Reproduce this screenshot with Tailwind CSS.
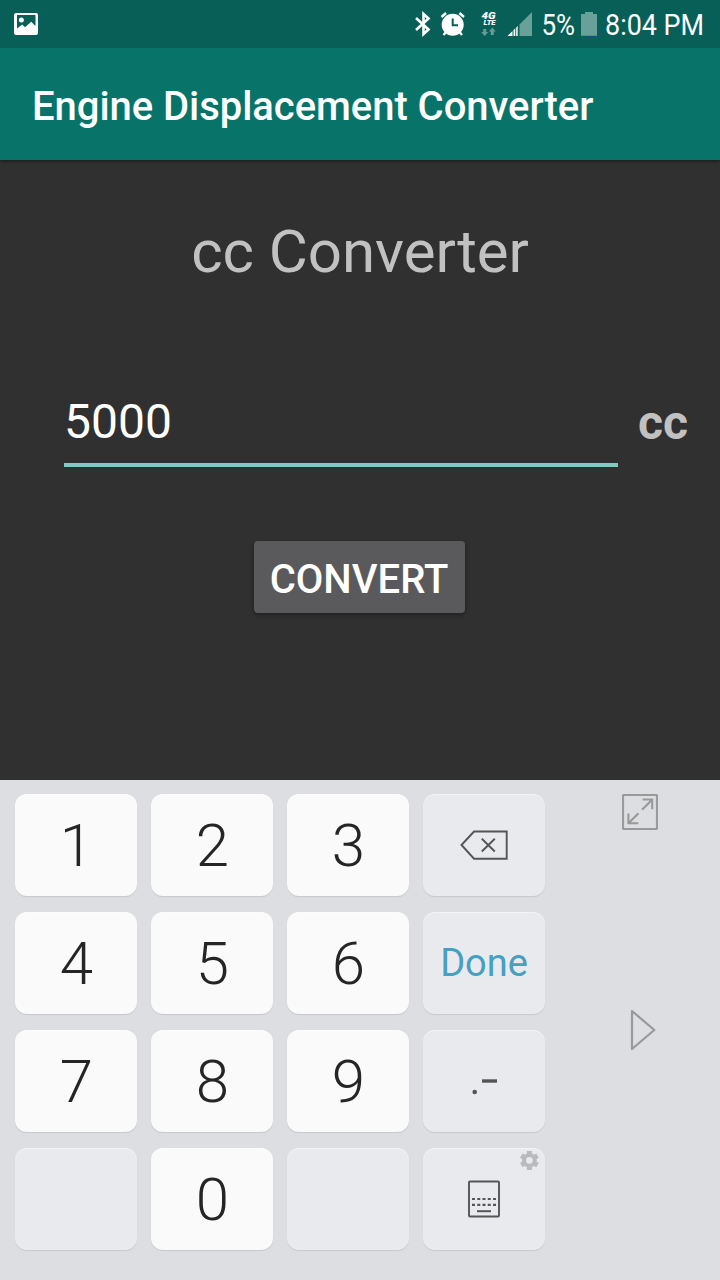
<!DOCTYPE html>
<html lang="en">
<head>
<meta charset="utf-8">
<title>Engine Displacement Converter</title>
<script src="https://cdn.jsdelivr.net/npm/@tailwindcss/browser@4"></script>
</head>
<body class="w-[720px] h-[1280px] overflow-hidden flex flex-col bg-[#303030] font-['Roboto',sans-serif]">

<header class="shrink-0 shadow-[0_1px_3px_rgba(0,0,0,0.5)]">
  <div class="h-12 bg-[#075f57] flex">
    <svg width="720" height="48" viewBox="0 0 720 48" fill="#fff" font-family="Roboto, sans-serif" font-size="30">
      <!-- picture notification -->
      <path fill-rule="evenodd" d="M16 13H36Q38 13 38 15V33Q38 35 36 35H16Q14 35 14 33V15Q14 13 16 13ZM17 15V28.500L22.300 24.500L25 27.300L31.200 21.800L35.500 26V15Z"/>
      <circle cx="21.400" cy="20" r="2.500"/>
      <!-- bluetooth -->
      <path d="M416 18L428.500 29.500L423.500 34V14L428.500 18.500L416 30" fill="none" stroke="#fff" stroke-width="2.600"/>
      <!-- alarm -->
      <circle cx="452.700" cy="24.700" r="11"/>
      <path d="M441.500 17L446 13M464 17L459.500 13M446 32L443.500 35M459.500 32L462 35" stroke="#fff" stroke-width="2.400" fill="none"/>
      <path d="M452.700 18.500V25.300H458" stroke="#075f57" stroke-width="2" fill="none"/>
      <!-- network type -->
      <text x="481.500" y="18.800" font-size="9.500" font-weight="900" font-style="italic" textLength="14" lengthAdjust="spacingAndGlyphs">4G</text>
      <text x="483.500" y="25.300" font-size="6.800" font-weight="900" font-style="italic" textLength="12" lengthAdjust="spacingAndGlyphs">LTE</text>
      <path fill="#649d97" d="M483.200 29H486.200V32H488.200L484.700 36L481.200 32H483.200ZM490.800 35H493.800V31.500H495.800L492.300 27.500L488.800 31.500H490.800Z"/>
      <!-- signal -->
      <path fill="#6aa09a" d="M519.500 24.500L532 12V36H519.500Z"/>
      <path d="M507.500 36L512.500 31V36ZM513.500 30L515.300 28.200V36H513.500ZM516.200 27.500L517.700 26V36H516.200Z"/>
      <text x="541.500" y="35" textLength="33.500" lengthAdjust="spacingAndGlyphs">5%</text>
      <!-- battery -->
      <path fill="#6aa09a" d="M585 12H593V14H597V35H581V14H585Z"/>
      <path fill="#dc5a36" d="M581 35H597V36H581Z"/>
      <text x="605" y="35" textLength="52" lengthAdjust="spacingAndGlyphs">8:04</text>
      <text x="663.500" y="35" textLength="40.500" lengthAdjust="spacingAndGlyphs">PM</text>
    </svg>
  </div>
  <div class="h-28 bg-[#087469] pl-8 pt-1.5 flex items-center">
    <h1 class="text-[40px] leading-none font-medium text-white whitespace-nowrap tracking-[-0.05px]">Engine Displacement Converter</h1>
  </div>
</header>

<main class="h-[620px] shrink-0 flex flex-col items-center">
  <h2 class="mt-[56px] h-[72px] leading-[72px] text-[60px] text-[#c1c1c1] whitespace-nowrap tracking-[-0.05px]">cc Converter</h2>
  <div class="mt-[96px] w-full pl-16 pr-8 h-[83px] flex justify-between">
    <div class="w-[554px] h-[83px] border-b-4 border-[#80cbc4] text-white text-[48px] leading-[76px]">5000</div>
    <div class="text-[48px] leading-[78px] font-bold text-[#c1c1c1]">cc</div>
  </div>
  <button class="mt-[74px] mr-[2px] w-[211px] h-[72px] rounded-[4px] bg-[#5a5a5c] text-white text-[40px] leading-none font-medium pt-1.5 shadow-[0_2px_4px_rgba(0,0,0,0.35)]">CONVERT</button>
</main>

<section class="h-[500px] shrink-0 bg-[#dddee2] flex">
  <div class="pl-[15px] pt-[14px] grid grid-cols-[repeat(4,122px)] auto-rows-[102px] gap-x-[14px] gap-y-4 text-[60px] font-light leading-none text-[#252525] *:rounded-[12px] *:flex *:items-center *:justify-center *:shadow-[0_1px_1px_rgba(0,0,0,0.1),inset_0_1px_1px_rgba(255,255,255,0.5)]">
    <div class="bg-[#fafafa] pt-0.5 pl-px">1</div>
    <div class="bg-[#fafafa] pt-0.5 pl-px">2</div>
    <div class="bg-[#fafafa] pt-0.5 pl-px">3</div>
    <div class="bg-[#e9eaee]">
      <svg width="122" height="102" viewBox="423 794 122 102" fill="none" stroke="#555" stroke-width="1.900"><path d="M461.500 845L474 831.500H506.700V858.700H474Z"/><path d="M481.800 838.800L494.800 851.500M494.800 838.800L481.800 851.500"/></svg>
    </div>
    <div class="bg-[#fafafa] pt-0.5 pl-px">4</div>
    <div class="bg-[#fafafa] pt-0.5 pl-px">5</div>
    <div class="bg-[#fafafa] pt-0.5 pl-px">6</div>
    <div class="bg-[#e9eaee] text-[38px] font-normal text-[#479fc1]">Done</div>
    <div class="bg-[#fafafa] pt-0.5 pl-px">7</div>
    <div class="bg-[#fafafa] pt-0.5 pl-px">8</div>
    <div class="bg-[#fafafa] pt-0.5 pl-px">9</div>
    <div class="bg-[#e9eaee]">
      <svg width="122" height="102" viewBox="423 1030 122 102" fill="#555"><circle cx="474.700" cy="1092" r="2.300"/><path d="M482 1079.300H497V1082.700H482Z"/></svg>
    </div>
    <div class="bg-[#e9eaee]"></div>
    <div class="bg-[#fafafa] pt-0.5 pl-px">0</div>
    <div class="bg-[#e9eaee]"></div>
    <div class="bg-[#e9eaee]">
      <svg width="122" height="102" viewBox="423 1148 122 102" fill="none" stroke="#555">
        <rect x="469" y="1181.500" width="30" height="35" rx="1" stroke-width="1.900"/>
        <path d="M472 1199H496.500M472 1204.800H496.500" stroke-width="2.200" stroke-dasharray="3 2.250"/>
        <path d="M477 1211.200H491" stroke-width="2"/>
        <g stroke="#b9babc">
          <circle cx="529.400" cy="1160.400" r="5.300" stroke-width="4"/>
          <path d="M529.400 1151V1155M529.400 1166V1170M521.300 1155.700L524.800 1157.700M534 1163.100L537.500 1165.100M521.300 1165.100L524.800 1163.100M534 1157.700L537.500 1155.700" stroke-width="5"/>
        </g>
      </svg>
    </div>
  </div>
  <div class="w-[175px] pl-[77px] pt-[14px] flex flex-col">
    <svg width="36" height="36" viewBox="0 0 36 36" fill="none" stroke="#999"><rect x="1" y="1" width="34" height="34" rx="1" stroke-width="2.200"/><path d="M20 15.700L30 5.700M20.500 5.500H30.200V15.200M16.500 19.200L6.500 29.200M6.400 19.500V29.300H16.300" stroke-width="2.100"/></svg>
    <svg class="ml-[7.5px] mt-[179px]" width="28" height="42" viewBox="0 0 28 42" fill="none" stroke="#999" stroke-width="2.200" stroke-linejoin="round"><path d="M2 2L24.300 21L2 40Z"/></svg>
  </div>
</section>
</body>
</html>
